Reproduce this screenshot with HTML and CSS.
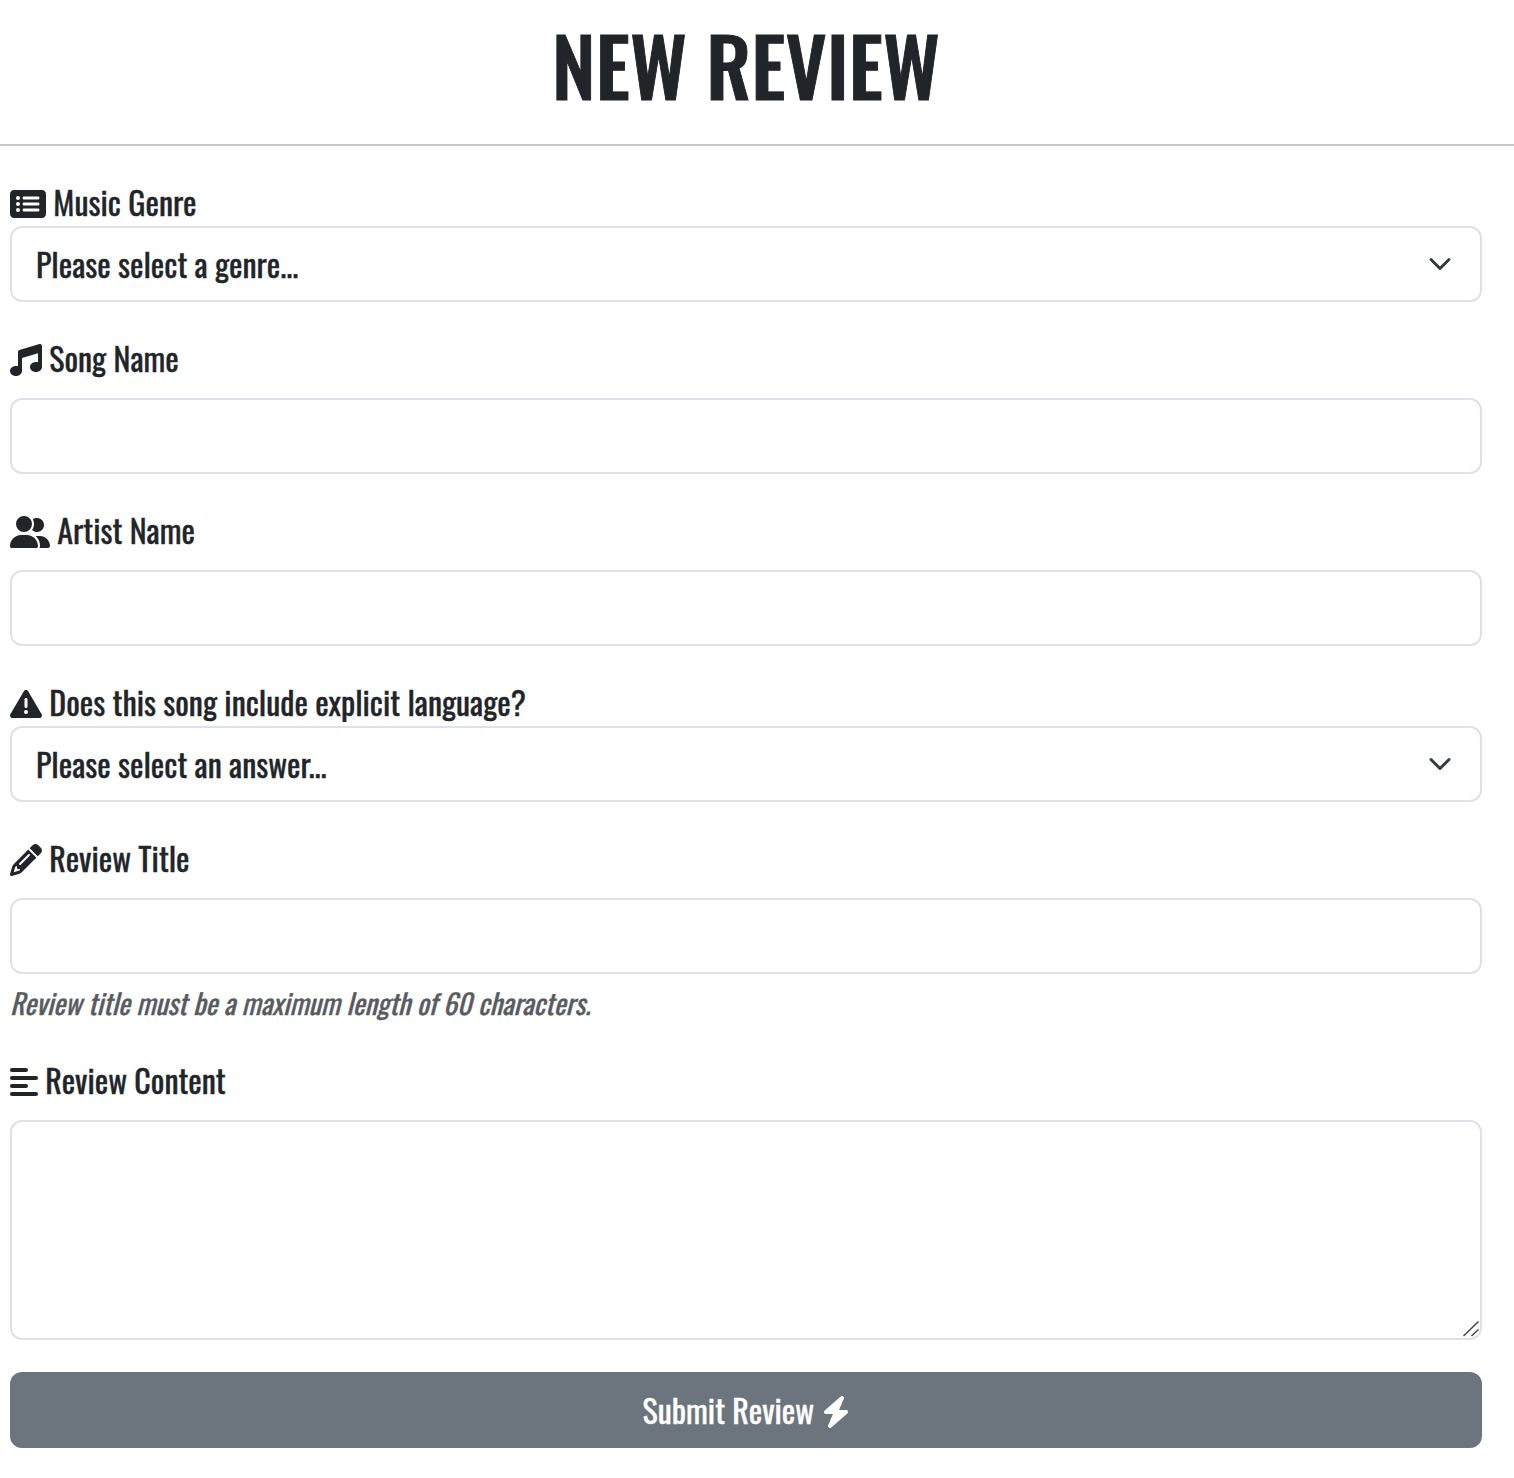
FILE: index.html
```
<!DOCTYPE html>
<html lang="en">
<head>
<meta charset="utf-8">
<title>New Review</title>
<link rel="stylesheet" href="styles.css">
</head>
<body>
<header class="page-header">
  <h1 class="page-title">NEW REVIEW</h1>
</header>
<form class="review-form">
  <div class="field">
    <label class="label" for="genre"><svg class="icon" viewBox="0 0 576 512"><path d="M0 96C0 60.700 28.700 32 64 32H512c35.300 0 64 28.700 64 64V416c0 35.300-28.700 64-64 64H64c-35.300 0-64-28.700-64-64V96zM128 288a32 32 0 1 0 0-64 32 32 0 1 0 0 64zm32-128a32 32 0 1 0 -64 0 32 32 0 1 0 64 0zM128 384a32 32 0 1 0 0-64 32 32 0 1 0 0 64zm96-248c-13.300 0-24 10.700-24 24s10.700 24 24 24H448c13.300 0 24-10.700 24-24s-10.700-24-24-24H224zm0 96c-13.300 0-24 10.700-24 24s10.700 24 24 24H448c13.300 0 24-10.700 24-24s-10.700-24-24-24H224zm0 96c-13.300 0-24 10.700-24 24s10.700 24 24 24H448c13.300 0 24-10.700 24-24s-10.700-24-24-24H224z"/></svg> Music Genre</label>
    <select class="control select" id="genre"><option>Please select a genre...</option></select>
  </div>
  <div class="field">
    <label class="label label-spaced" for="song"><svg class="icon" viewBox="0 0 512 512"><path d="M499.100 6.300c8.100 6 12.900 15.600 12.900 25.700v72V368c0 44.200-43 80-96 80s-96-35.800-96-80s43-80 96-80c11.200 0 22 1.600 32 4.600V147L192 223.800V432c0 44.200-43 80-96 80s-96-35.800-96-80s43-80 96-80c11.200 0 22 1.600 32 4.600V200 128c0-14.100 9.300-26.600 22.800-30.700l320-96c9.700-2.900 20.200-1.100 28.300 5z"/></svg> Song Name</label>
    <input class="control" id="song" type="text">
  </div>
  <div class="field">
    <label class="label label-spaced" for="artist"><svg class="icon" viewBox="0 0 640 512"><path d="M96 128a128 128 0 1 1 256 0A128 128 0 1 1 96 128zM0 482.300C0 383.800 79.800 304 178.300 304h91.400C368.200 304 448 383.800 448 482.300c0 16.400-13.300 29.700-29.700 29.700H29.700C13.300 512 0 498.700 0 482.300zM609.300 512H471.400c5.400-9.400 8.600-20.300 8.600-32v-8c0-60.700-27.100-115.200-69.800-151.800c2.400-.1 4.700-.2 7.100-.2h61.400C567.800 320 640 392.200 640 481.300c0 17-13.800 30.700-30.700 30.700zM432 256c-31 0-59-12.600-79.300-32.900C372.400 196.500 384 163.600 384 128c0-26.800-6.600-52.100-18.300-74.300C384.300 40.100 407.200 32 432 32c61.900 0 112 50.100 112 112s-50.100 112-112 112z"/></svg> Artist Name</label>
    <input class="control" id="artist" type="text">
  </div>
  <div class="field">
    <label class="label" for="explicit"><svg class="icon" viewBox="0 0 512 512"><path d="M256 32c14.200 0 27.300 7.500 34.500 19.800l216 368c7.300 12.400 7.300 27.700 .2 40.100S486.300 480 472 480H40c-14.300 0-27.600-7.700-34.700-20.100s-7-27.800 .2-40.100l216-368C228.700 39.500 241.800 32 256 32zm0 128c-13.300 0-24 10.700-24 24V296c0 13.300 10.700 24 24 24s24-10.700 24-24V184c0-13.300-10.700-24-24-24zm32 224a32 32 0 1 0 -64 0 32 32 0 1 0 64 0z"/></svg> Does this song include explicit language?</label>
    <select class="control select" id="explicit"><option>Please select an answer...</option></select>
  </div>
  <div class="field">
    <label class="label label-spaced" for="title"><svg class="icon" viewBox="0 0 512 512"><path d="M410.300 231l11.300-11.300-33.900-33.900-62.100-62.100L291.700 89.800l-11.300 11.300-22.600 22.600L58.600 322.900c-10.400 10.400-18 23.300-22.200 37.400L1 480.700c-2.500 8.400-.2 17.500 6.100 23.700s15.300 8.500 23.700 6.100l120.300-35.400c14.100-4.200 27-11.800 37.400-22.200L387.700 253.700 410.300 231zM160 399.400l-9.100 22.700c-4 3.100-8.500 5.400-13.300 6.900L59.400 452l23-78.100c1.400-4.900 3.800-9.400 6.900-13.300l22.700-9.100v32c0 8.800 7.200 16 16 16h32zM362.700 18.700L348.300 33.200 325.700 55.800 314.300 67.100l33.900 33.900 62.100 62.100 33.900 33.900 11.300-11.300 22.600-22.600 14.500-14.500c25-25 25-65.500 0-90.500L453.300 18.700c-25-25-65.500-25-90.500 0zm-47.400 168l-144 144c-6.200 6.200-16.400 6.200-22.600 0s-6.200-16.400 0-22.600l144-144c6.200-6.200 16.400-6.200 22.600 0s6.200 16.400 0 22.600z"/></svg> Review Title</label>
    <input class="control" id="title" type="text">
    <div class="hint">Review title must be a maximum length of 60 characters.</div>
  </div>
  <div class="field">
    <label class="label label-spaced" for="content"><svg class="icon" viewBox="0 0 448 512"><path d="M288 64c0 17.700-14.300 32-32 32H32C14.300 96 0 81.700 0 64S14.300 32 32 32H256c17.700 0 32 14.300 32 32zm0 256c0 17.700-14.300 32-32 32H32c-17.700 0-32-14.300-32-32s14.300-32 32-32H256c17.700 0 32 14.300 32 32zM0 192c0-17.700 14.300-32 32-32H416c17.700 0 32 14.300 32 32s-14.300 32-32 32H32c-17.700 0-32-14.300-32-32zM448 448c0 17.700-14.300 32-32 32H32c-17.700 0-32-14.300-32-32s14.300-32 32-32H416c17.700 0 32 14.300 32 32z"/></svg> Review Content</label>
    <div class="textarea-wrap">
      <textarea class="control textarea" id="content"></textarea>
      <svg class="grip" viewBox="0 0 18 18"><path d="M1.500 16 16.500 1.500M9.500 16 16.500 9.500"/></svg>
    </div>
  </div>
  <button class="submit" type="button">Submit Review <svg class="icon" viewBox="0 0 448 512"><path d="M349.400 44.600c5.900-13.700 1.500-29.700-10.600-38.500s-28.600-8-39.900 1.800l-256 224c-10 8.800-13.600 22.900-8.900 35.300S50.700 288 64 288H175.500L98.600 467.400c-5.900 13.700-1.500 29.700 10.600 38.500s28.600 8 39.900-1.800l256-224c10-8.800 13.600-22.900 8.900-35.300s-16.600-20.700-30-20.700H272.500L349.400 44.600z"/></svg></button>
</form>
</body>
</html>
```
FILE: styles.css
```
*, *::before, *::after { box-sizing: border-box; }

body {
  margin: 0;
  background: #fff;
  color: #212529;
  font: 400 32px/48px Oswald, "Roboto Condensed", Roboto, sans-serif;
  -webkit-text-stroke: .35px currentColor;
}

.page-header {
  padding: 16px 32px 32px 10px;
  border-bottom: 2px solid #c8c8c9;
  text-align: center;
}

.page-title {
  margin: 0;
  font-size: 80px;
  font-weight: 500;
  line-height: 96px;
  -webkit-text-stroke-width: .9px;
}

.review-form {
  display: flex;
  flex-direction: column;
  gap: 32px;
  padding: 32px 32px 30px 10px;
}

.field { display: flex; flex-direction: column; }

.label { display: block; height: 48px; white-space: nowrap; }
.label-spaced { margin-bottom: 16px; }

.icon {
  display: inline-block;
  height: 32px;
  vertical-align: -4px;
  fill: currentColor;
  overflow: visible;
}

.control {
  display: block;
  width: 100%;
  height: 76px;
  margin: 0;
  padding: 12px 24px;
  border: 2px solid #dee2e6;
  border-radius: 12px;
  outline: 0;
  background: #fff;
  color: #212529;
  font: inherit;
}

.select {
  appearance: none;
  background: #fff url("data:image/svg+xml,%3Csvg xmlns='http://www.w3.org/2000/svg' viewBox='0 0 16 16'%3E%3Cpath fill='none' stroke='%23343a40' stroke-linecap='round' stroke-linejoin='round' stroke-width='2' d='m2 5 6 6 6-6'/%3E%3C/svg%3E") no-repeat right 24px center / 32px 24px;
}

.hint {
  height: 42px;
  margin-top: 8px;
  color: #585b5f;
  font-size: 28px;
  font-style: italic;
  line-height: 42px;
}

.textarea-wrap { position: relative; }
.textarea { height: 220px; resize: none; }

.grip {
  position: absolute;
  right: 2px;
  bottom: 2px;
  width: 18px;
  height: 18px;
  fill: none;
  stroke: #4a4a4a;
  stroke-width: 1.6;
}

.submit {
  height: 76px;
  padding: 12px 24px;
  border: 2px solid #6c757d;
  border-radius: 12px;
  background: #6c757d;
  color: #fff;
  font: inherit;
}

.submit .icon { margin: 0 -.5px 0 .5px; }
```
